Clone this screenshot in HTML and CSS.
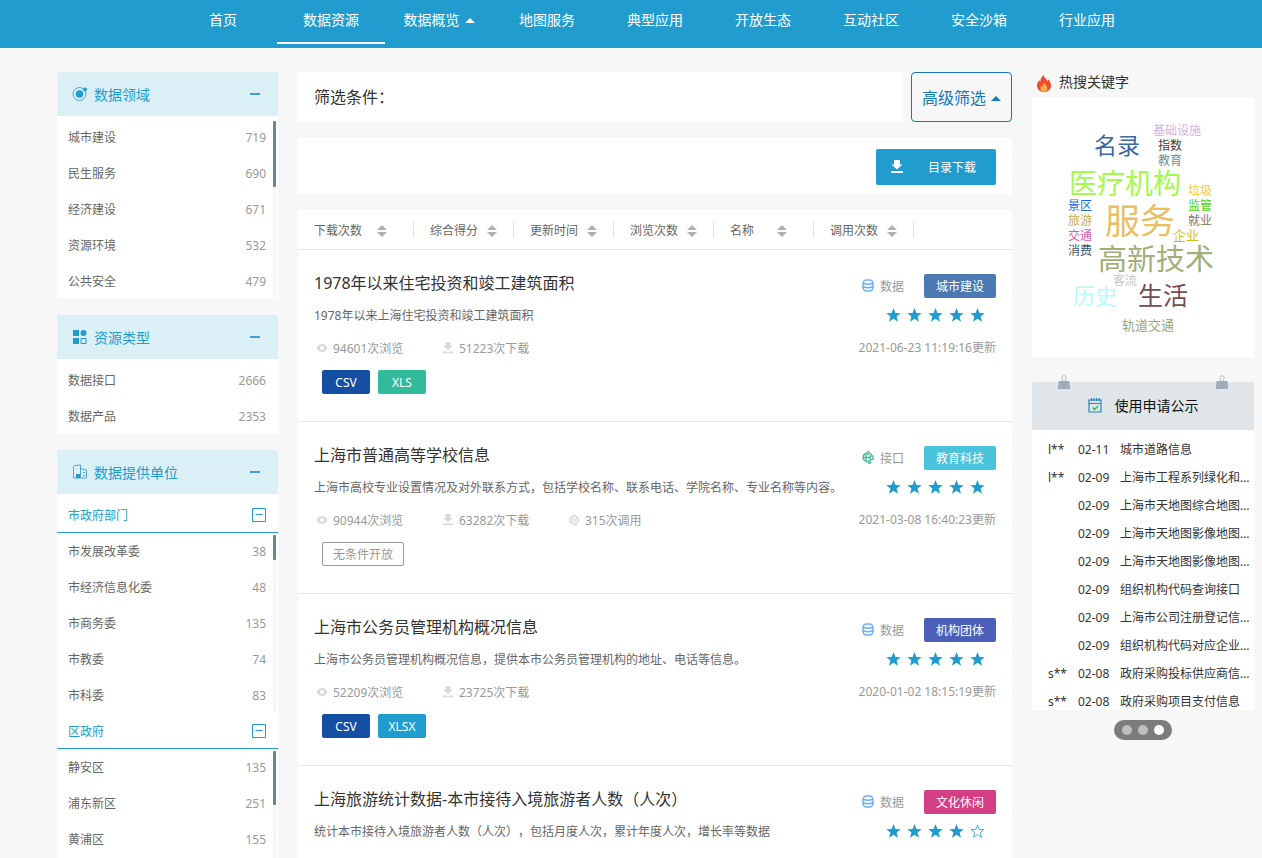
FILE: index.html
```html
<!DOCTYPE html>
<html lang="zh-CN">
<head>
<meta charset="utf-8">
<title>数据资源</title>
<link rel="stylesheet" href="styles.css">
</head>
<body>
<svg class="sprite" aria-hidden="true">
  <symbol id="i-eye" viewBox="0 0 12 12"><path fill="currentColor" fill-rule="evenodd" d="M.5 6C1.800 3.300 3.800 2 6 2s4.200 1.300 5.500 4C10.200 8.700 8.200 10 6 10S1.800 8.700.5 6zM6 4a2 2 0 1 0 0 4 2 2 0 0 0 0-4z"/></symbol>
  <symbol id="i-down" viewBox="0 0 12 14"><path fill="currentColor" d="M3 0h6v4.500h2.500L6 9.500.5 4.500H3zM0 11h12v2H0z"/></symbol>
  <symbol id="i-api" viewBox="0 0 12 13"><g fill="none" stroke="currentColor" stroke-width="1.300"><path d="M4.500 2.500C2 3 1 4.500 1 6.500S2.500 10 6 11M1 6.500h7M4 3v7M8 2.500c1 .3 1.800 1 2 2"/><circle cx="6.200" cy="2" r="1.300"/><rect x="8" y="5" width="3" height="3.500"/><circle cx="7.500" cy="11" r="1.300"/></g></symbol>
  <symbol id="i-data" viewBox="0 0 12 13"><g fill="none" stroke="currentColor" stroke-width="1.500"><rect x="1" y="1" width="10" height="11" rx="3.500"/><path d="M1 4c1 1.500 9 1.500 10 0M1 7.500c1 1.500 9 1.500 10 0"/></g></symbol>
  <symbol id="i-star" viewBox="0 0 15 14"><path fill="currentColor" d="M7.500 0l1.900 4.900 5.300.3-4.100 3.300L12 13.700l-4.500-2.900L3 13.700l1.400-5.200L.3 5.200l5.300-.3z"/></symbol>
  <symbol id="i-star-o" viewBox="0 0 15 14"><path fill="none" stroke="currentColor" stroke-width=".8" d="M7.500 1l1.600 4.300 4.800.3-3.700 3 1.300 4.600-4-2.600-4 2.600 1.300-4.600-3.700-3 4.800-.3z"/></symbol>
  <symbol id="i-sort" viewBox="0 0 10 12"><path fill="currentColor" d="M5 0l5 5H0zM0 7h10l-5 5z"/></symbol>
  <symbol id="i-up" viewBox="0 0 10 5"><path fill="currentColor" d="M5 0l5 5H0z"/></symbol>
  <symbol id="i-clip" viewBox="0 0 12 14"><path fill="none" stroke="#b4bec8" d="M4.500 7V4.500a2.200 2.200 0 1 1 3 0V7"/><path fill="#9eacb9" d="M.5 6h11v4h.5v4H0v-4h.5z"/></symbol>
  <symbol id="i-box" viewBox="0 0 14 14"><path fill="none" stroke="currentColor" d="M.5.5h13v13H.5zM3.500 6.500h7"/></symbol>
</svg>

<header class="topbar">
  <nav class="nav">
    <a class="nav__item" href="#">首页</a>
    <a class="nav__item nav__item--active" href="#">数据资源</a>
    <a class="nav__item" href="#">数据概览<svg class="caret"><use href="#i-up"/></svg></a>
    <a class="nav__item" href="#">地图服务</a>
    <a class="nav__item" href="#">典型应用</a>
    <a class="nav__item" href="#">开放生态</a>
    <a class="nav__item" href="#">互动社区</a>
    <a class="nav__item" href="#">安全沙箱</a>
    <a class="nav__item" href="#">行业应用</a>
  </nav>
</header>

<div class="layout">
  <aside class="side">
    <section class="panel">
      <h2 class="panel__head">
        <svg class="panel__icon" viewBox="0 0 16 16"><circle cx="7.500" cy="8" r="6.500" fill="none" stroke="#4fa6d3"/><circle cx="7.500" cy="8" r="3.800" fill="#209dce"/><circle cx="13" cy="3.500" r="2" fill="#209dce"/></svg>
        <span class="panel__title">数据领域</span><button class="panel__toggle" aria-label="收起数据领域"></button>
      </h2>
      <ul class="facets facets--first facets--scroll facets--a">
        <li><a href="#">城市建设</a><span>719</span></li>
        <li><a href="#">民生服务</a><span>690</span></li>
        <li><a href="#">经济建设</a><span>671</span></li>
        <li><a href="#">资源环境</a><span>532</span></li>
        <li><a href="#">公共安全</a><span>479</span></li>
      </ul>
    </section>
    <section class="panel">
      <h2 class="panel__head">
        <svg class="panel__icon" viewBox="0 0 16 16"><path fill="#209dce" d="M1 1h6v6H1zM1 9h6v6H1z"/><circle cx="11.500" cy="4" r="3" fill="#209dce"/><path fill="none" stroke="#209dce" d="M9 9.500h5v5H9z"/></svg>
        <span class="panel__title">资源类型</span><button class="panel__toggle" aria-label="收起资源类型"></button>
      </h2>
      <ul class="facets facets--first">
        <li><a href="#">数据接口</a><span>2666</span></li>
        <li><a href="#">数据产品</a><span>2353</span></li>
      </ul>
    </section>
    <section class="panel">
      <h2 class="panel__head">
        <svg class="panel__icon" viewBox="0 0 16 16"><path fill="none" stroke="#4fa6d3" d="M1.500 14V2.500l1-1 6-.5v13zM8.500 4.500l6 1.500v8h-6M11 8.500h2M11 11.500h2"/><path fill="#209dce" d="M4 10h4v4H4z"/></svg>
        <span class="panel__title">数据提供单位</span><button class="panel__toggle" aria-label="收起数据提供单位"></button>
      </h2>
      <h3 class="group group--first"><span>市政府部门</span><button class="group__toggle" aria-label="收起市政府部门"><svg><use href="#i-box"/></svg></button></h3>
      <ul class="facets facets--scroll facets--b">
        <li><a href="#">市发展改革委</a><span>38</span></li>
        <li><a href="#">市经济信息化委</a><span>48</span></li>
        <li><a href="#">市商务委</a><span>135</span></li>
        <li><a href="#">市教委</a><span>74</span></li>
        <li><a href="#">市科委</a><span>83</span></li>
      </ul>
      <h3 class="group"><span>区政府</span><button class="group__toggle" aria-label="收起区政府"><svg><use href="#i-box"/></svg></button></h3>
      <ul class="facets facets--scroll facets--c">
        <li><a href="#">静安区</a><span>135</span></li>
        <li><a href="#">浦东新区</a><span>251</span></li>
        <li><a href="#">黄浦区</a><span>155</span></li>
      </ul>
    </section>
  </aside>

  <main class="main">
    <div class="filter">
      <div class="filter__box">筛选条件：</div>
      <button class="filter__more"><span>高级筛选</span><svg class="caret"><use href="#i-up"/></svg></button>
    </div>
    <div class="toolbar">
      <button class="download"><svg><use href="#i-down"/></svg><span>目录下载</span></button>
    </div>
    <div class="results">
      <div class="sort">
        <button class="sort__item sort__item--lead">下载次数<svg><use href="#i-sort"/></svg></button>
        <button class="sort__item">综合得分<svg><use href="#i-sort"/></svg></button>
        <button class="sort__item">更新时间<svg><use href="#i-sort"/></svg></button>
        <button class="sort__item">浏览次数<svg><use href="#i-sort"/></svg></button>
        <button class="sort__item sort__item--short">名称<svg><use href="#i-sort"/></svg></button>
        <button class="sort__item">调用次数<svg><use href="#i-sort"/></svg></button>
      </div>

      <article class="record">
        <div class="record__body">
          <h3 class="record__title"><a href="#">1978年以来住宅投资和竣工建筑面积</a></h3>
          <p class="record__desc">1978年以来上海住宅投资和竣工建筑面积</p>
          <div class="record__meta">
            <span><svg><use href="#i-eye"/></svg>94601次浏览</span>
            <span><svg><use href="#i-down"/></svg>51223次下载</span>
          </div>
          <div class="tags"><span class="tag tag--csv">CSV</span><span class="tag tag--xls">XLS</span></div>
        </div>
        <div class="record__side">
          <div class="kind"><svg class="kind--data"><use href="#i-data"/></svg><span>数据</span><span class="topic topic--city">城市建设</span></div>
          <div class="stars"><svg><use href="#i-star"/></svg><svg><use href="#i-star"/></svg><svg><use href="#i-star"/></svg><svg><use href="#i-star"/></svg><svg><use href="#i-star"/></svg></div>
          <time class="date">2021-06-23 11:19:16更新</time>
        </div>
      </article>

      <article class="record">
        <div class="record__body">
          <h3 class="record__title"><a href="#">上海市普通高等学校信息</a></h3>
          <p class="record__desc">上海市高校专业设置情况及对外联系方式，包括学校名称、联系电话、学院名称、专业名称等内容。</p>
          <div class="record__meta">
            <span><svg><use href="#i-eye"/></svg>90944次浏览</span>
            <span><svg><use href="#i-down"/></svg>63282次下载</span>
            <span><svg><use href="#i-api"/></svg>315次调用</span>
          </div>
          <div class="tags"><span class="tag tag--open">无条件开放</span></div>
        </div>
        <div class="record__side">
          <div class="kind"><svg class="kind--api"><use href="#i-api"/></svg><span>接口</span><span class="topic topic--edu">教育科技</span></div>
          <div class="stars"><svg><use href="#i-star"/></svg><svg><use href="#i-star"/></svg><svg><use href="#i-star"/></svg><svg><use href="#i-star"/></svg><svg><use href="#i-star"/></svg></div>
          <time class="date">2021-03-08 16:40:23更新</time>
        </div>
      </article>

      <article class="record">
        <div class="record__body">
          <h3 class="record__title"><a href="#">上海市公务员管理机构概况信息</a></h3>
          <p class="record__desc">上海市公务员管理机构概况信息，提供本市公务员管理机构的地址、电话等信息。</p>
          <div class="record__meta">
            <span><svg><use href="#i-eye"/></svg>52209次浏览</span>
            <span><svg><use href="#i-down"/></svg>23725次下载</span>
          </div>
          <div class="tags"><span class="tag tag--csv">CSV</span><span class="tag tag--xlsx">XLSX</span></div>
        </div>
        <div class="record__side">
          <div class="kind"><svg class="kind--data"><use href="#i-data"/></svg><span>数据</span><span class="topic topic--org">机构团体</span></div>
          <div class="stars"><svg><use href="#i-star"/></svg><svg><use href="#i-star"/></svg><svg><use href="#i-star"/></svg><svg><use href="#i-star"/></svg><svg><use href="#i-star"/></svg></div>
          <time class="date">2020-01-02 18:15:19更新</time>
        </div>
      </article>

      <article class="record">
        <div class="record__body">
          <h3 class="record__title"><a href="#">上海旅游统计数据-本市接待入境旅游者人数（人次）</a></h3>
          <p class="record__desc">统计本市接待入境旅游者人数（人次），包括月度人次，累计年度人次，增长率等数据</p>
          <div class="record__meta">
            <span><svg><use href="#i-eye"/></svg></span>
            <span><svg><use href="#i-down"/></svg></span>
          </div>
        </div>
        <div class="record__side">
          <div class="kind"><svg class="kind--data"><use href="#i-data"/></svg><span>数据</span><span class="topic topic--culture">文化休闲</span></div>
          <div class="stars"><svg><use href="#i-star"/></svg><svg><use href="#i-star"/></svg><svg><use href="#i-star"/></svg><svg><use href="#i-star"/></svg><svg><use href="#i-star-o"/></svg></div>
        </div>
      </article>
    </div>
  </main>

  <aside class="extra">
    <h2 class="hot">
      <svg viewBox="0 0 14 17"><path fill="#ee4b2b" d="M6.500 0c.5 2.500 3.300 3.800 3.800 6 .7-.4.900-1 1-1.800 1.700 2 2.700 4.300 2.700 6.300C14 14.300 11 17 7 17s-7-2.600-7-6.300C0 8.400 1.200 6.600 2.400 5c.1 1 .3 1.600.9 2C3.300 4.500 4.300 1.800 6.500 0z"/><path fill="#ffb14a" d="M7.500 7.500c0 2 2.800 3 2.800 5.800 0 2-1.300 3.400-3.400 3.400s-3.500-1.300-3.500-3.200c0-1.400.7-2.200 1.300-3 .2.700.5 1 .9 1.200.2-1.700.7-3.200 1.900-4.200z"/></svg>
      热搜关键字
    </h2>
    <div class="cloud">
      <a class="w w1" href="#">基础设施</a><a class="w w2" href="#">名录</a><a class="w w3" href="#">指数</a><a class="w w4" href="#">教育</a>
      <a class="w w5" href="#">医疗机构</a><a class="w w6" href="#">垃圾</a><a class="w w7" href="#">景区</a><a class="w w8" href="#">监管</a>
      <a class="w w9" href="#">服务</a><a class="w w10" href="#">旅游</a><a class="w w11" href="#">就业</a><a class="w w12" href="#">交通</a>
      <a class="w w13" href="#">企业</a><a class="w w14" href="#">消费</a><a class="w w15" href="#">高新技术</a><a class="w w16" href="#">客流</a>
      <a class="w w17" href="#">历史</a><a class="w w18" href="#">生活</a><a class="w w19" href="#">轨道交通</a>
    </div>
    <section class="notice">
      <svg class="clip clip--left"><use href="#i-clip"/></svg>
      <svg class="clip clip--right"><use href="#i-clip"/></svg>
      <h2 class="notice__head">
        <svg viewBox="0 0 14 15"><path fill="none" stroke="#2b83bd" stroke-width="1.200" d="M1 2h12v12H1zM1 5.500h12M3.500 0v3M6 0v3M8.500 0v3M11 0v3"/><path fill="none" stroke="#2fc24a" stroke-width="1.500" d="M4.500 9.500l2 2 3.500-3.500"/></svg>
        使用申请公示
      </h2>
      <ul class="notice__list">
        <li><span>l**</span><time>02-11</time><a href="#">城市道路信息</a></li>
        <li><span>l**</span><time>02-09</time><a href="#">上海市工程系列绿化和市容</a></li>
        <li><span></span><time>02-09</time><a href="#">上海市天地图综合地图服务</a></li>
        <li><span></span><time>02-09</time><a href="#">上海市天地图影像地图服务</a></li>
        <li><span></span><time>02-09</time><a href="#">上海市天地图影像地图服务</a></li>
        <li><span></span><time>02-09</time><a href="#">组织机构代码查询接口</a></li>
        <li><span></span><time>02-09</time><a href="#">上海市公司注册登记信息查询</a></li>
        <li><span></span><time>02-09</time><a href="#">组织机构代码对应企业信息</a></li>
        <li><span>s**</span><time>02-08</time><a href="#">政府采购投标供应商信息</a></li>
        <li><span>s**</span><time>02-08</time><a href="#">政府采购项目支付信息</a></li>
      </ul>
    </section>
    <div class="dots">
      <button aria-label="第1页"></button><button aria-label="第2页"></button><button class="is-on" aria-label="第3页"></button>
    </div>
  </aside>
</div>
</body>
</html>
```
FILE: styles.css
```css
* { box-sizing: border-box; }
html, body { height: 100%; }
body {
  margin: 0;
  overflow: hidden;
  background: #f7f7f7;
  color: #666;
  font: 12px/20px "Noto Sans", "Noto Sans CJK SC", sans-serif;
  text-spacing-trim: space-all;
}
h2, h3, p, ul { margin: 0; padding: 0; font-weight: normal; }
ul { list-style: none; }
a { color: inherit; text-decoration: none; }
button { margin: 0; padding: 0; border: 0; background: none; font: inherit; color: inherit; cursor: pointer; text-spacing-trim: inherit; }
svg { flex: none; }
.sprite { display: none; }

/* top navigation */
.topbar { height: 48px; background: #209dce; }
.nav { display: flex; padding-left: 169px; }
.nav__item {
  display: flex;
  align-items: center;
  justify-content: center;
  width: 108px;
  height: 44px;
  padding-bottom: 2px;
  border-bottom: 2px solid transparent;
  color: #fff;
  font-size: 14px;
}
.nav__item--active { border-color: #fff; }
.caret { width: 10px; height: 5px; margin-left: 5px; }

/* page columns */
.layout {
  display: grid;
  grid-template-columns: 221px 1fr 222px;
  gap: 20px;
  align-items: start;
  padding: 24px 8px 0 57px;
}

/* facet sidebar */
.side { display: grid; gap: 16px; }
.panel { background: #fff; border-radius: 2px; overflow: hidden; }
.panel__head { display: flex; align-items: center; height: 44px; padding: 0 18px 0 15px; background: #dbeff6; color: #209dce; }
.panel__icon { width: 16px; height: 16px; }
.panel__title { margin-left: 6px; padding-top: 2px; font-size: 14px; }
.panel__toggle { width: 10px; height: 2px; margin-left: auto; background: #3fa3d2; }
.facets { position: relative; }
.facets--first { padding-top: 3px; }
.facets li { display: flex; align-items: center; justify-content: space-between; height: 36px; padding: 2px 12px 0 11px; }
.facets span { color: #999; }
.facets--scroll::before,
.facets--scroll::after { content: ""; position: absolute; top: 2px; right: 2px; width: 3px; background: #f5f5f5; }
.facets--scroll::before { bottom: 2px; }
.facets--scroll::after { background: #688790; border-radius: 1px; }
.facets--a::before, .facets--a::after { top: 5px; }
.facets--a::after { height: 66px; }
.facets--b::after { height: 25px; }
.facets--c { min-height: 180px; }
.facets--c::after { height: 54px; }
.group { display: flex; align-items: center; justify-content: space-between; height: 36px; padding: 0 12px 0 11px; border-bottom: 1px solid #209dce; color: #209dce; font-size: 12px; }
.group span { padding-top: 2px; }
.group--first { margin-top: 3px; }
.group__toggle { display: flex; }
.group__toggle svg { width: 14px; height: 14px; }

/* filter and toolbar */
.main { display: grid; gap: 16px; min-width: 0; }
.filter { display: flex; gap: 8px; height: 50px; color: #333; font-size: 16px; }
.filter__box { flex: 1; padding-left: 16px; background: #fff; line-height: 50px; }
.filter__more { display: flex; align-items: center; justify-content: center; width: 101px; padding-top: 2px; border: 1px solid #1478b9; border-radius: 4px; color: #1478b9; }
.toolbar { display: flex; align-items: center; justify-content: flex-end; height: 56px; padding: 2px 16px 0; background: #fff; border-radius: 2px; }
.download { display: flex; align-items: center; justify-content: space-between; width: 120px; height: 36px; padding: 0 20px 0 15px; background: #209dce; border-radius: 2px; color: #fff; }
.download span { padding-top: 2px; }
.download svg { width: 12px; height: 14px; }

/* sort bar */
.results { background: #fff; }
.sort { display: flex; align-items: center; height: 40px; border-bottom: 1px solid #e6e6e6; }
.sort__item { display: flex; align-items: center; gap: 9px; width: 100px; height: 16px; padding: 2px 0 0 16px; border-right: 1px solid #e2e2e2; line-height: 16px; }
.sort__item svg { width: 10px; height: 12px; color: #b0b0b0; }
.sort__item--lead { width: 116px; gap: 15px; }
.sort__item--short { gap: 23px; }

/* records */
.record { display: flex; min-height: 172px; padding: 22px 16px 0; border-bottom: 1px solid #e6e6e6; }
.record__body { flex: 1; min-width: 0; line-height: 22px; }
.record__title { color: #333; font-size: 16px; line-height: 22px; }
.record__desc { margin-top: 11px; white-space: nowrap; }
.record__meta { display: flex; height: 22px; margin-top: 11px; padding-left: 2px; color: #999; }
.record__meta span { display: flex; align-items: center; gap: 5px; width: 126px; }
.record__meta svg { width: 12px; height: 12px; margin-bottom: 2px; color: #d9d9d9; }
.tags { display: flex; gap: 8px; margin: 10px 0 0 8px; }
.tag { min-width: 48px; height: 24px; border-radius: 2px; color: #fff; line-height: 26px; text-align: center; }
.tag--csv { background: #154fa4; }
.tag--xls { background: #31bb9b; }
.tag--xlsx { background: #209dce; }
.tag--open { padding: 0 10px; border: 1px solid #999; color: #999; line-height: 24px; }
.record__side { display: flex; flex-direction: column; align-items: flex-end; padding-top: 2px; color: #999; }
.kind { display: flex; align-items: center; height: 24px; }
.kind span { height: 24px; line-height: 26px; }
.kind svg { width: 12px; height: 13px; margin: 0 6px 2px 0; }
.kind--data { color: #6cb0fb; }
.kind--api { color: #3fbd9a; }
.topic { width: 72px; margin-left: 20px; border-radius: 2px; color: #fff; text-align: center; }
.topic--city { background: #4a79b3; }
.topic--edu { background: #49c3db; }
.topic--org { background: #4b5fb8; }
.topic--culture { background: #d33e84; }
.stars { display: flex; gap: 6px; margin: 10px 11px 0 0; color: #209dce; }
.stars svg { width: 15px; height: 14px; }
.date { margin-top: 16px; line-height: 20px; }

/* hot keywords */
.hot { display: flex; align-items: center; gap: 8px; height: 25px; padding: 0 0 6px 5px; color: #333; font-size: 14px; }
.hot svg { width: 14px; height: 17px; margin-top: 4px; }
.cloud { position: relative; height: 260px; background: #fff; }
.w { position: absolute; font-size: 12px; line-height: 1; white-space: nowrap; }
.w1 { left: 121px; top: 28px; color: #d7b0e3; }
.w2 { left: 62px; top: 37px; font-size: 23px; color: #3a6a9f; }
.w3 { left: 126px; top: 43px; color: #4a3a3a; }
.w4 { left: 126px; top: 58px; color: #6c8f90; }
.w5 { left: 37px; top: 72px; font-size: 28px; color: #a3f94c; }
.w6 { left: 156px; top: 88px; color: #fdc621; }
.w7 { left: 36px; top: 103px; color: #1f66ee; }
.w8 { left: 156px; top: 103px; color: #43d812; }
.w9 { left: 73px; top: 106px; font-size: 35px; color: #e8c063; }
.w10 { left: 36px; top: 118px; color: #c8a94a; }
.w11 { left: 156px; top: 118px; color: #80716a; }
.w12 { left: 36px; top: 133px; color: #d95bb6; }
.w13 { left: 141px; top: 132px; font-size: 13px; color: #d2bd1c; }
.w14 { left: 36px; top: 148px; color: #3b5670; }
.w15 { left: 66px; top: 147px; font-size: 29px; color: #a3ad78; }
.w16 { left: 81px; top: 178px; color: #c4c4c4; }
.w17 { left: 41px; top: 187px; font-size: 22px; color: #b4fcfa; }
.w18 { left: 106px; top: 186px; font-size: 25px; color: #754c54; }
.w19 { left: 90px; top: 222px; font-size: 13px; color: #9aa672; }

/* application notices */
.notice { position: relative; margin-top: 25px; }
.clip { position: absolute; top: -7px; width: 12px; height: 14px; }
.clip--left { left: 26px; }
.clip--right { right: 26px; }
.notice__head { display: flex; align-items: center; justify-content: center; gap: 13px; height: 48px; background: #e0e5e9; border-radius: 2px 2px 0 0; color: #111; font-size: 14px; }
.notice__head svg { width: 14px; height: 15px; margin-bottom: 2px; }
.notice__list { height: 280px; padding-top: 6px; overflow: hidden; background: #fff; color: #333; }
.notice__list li { display: grid; grid-template-columns: 30px 42px 1fr; align-items: center; height: 28px; padding: 0 4px 0 16px; }
.notice__list a { overflow: hidden; text-overflow: ellipsis; white-space: nowrap; }
.dots { display: flex; gap: 6px; width: 58px; margin: 10px auto 0; padding: 5px 8px; border-radius: 10px; background: #7c7c7c; }
.dots button { width: 10px; height: 10px; border-radius: 50%; background: #bdbdbd; }
.dots .is-on { background: #fff; }
```
